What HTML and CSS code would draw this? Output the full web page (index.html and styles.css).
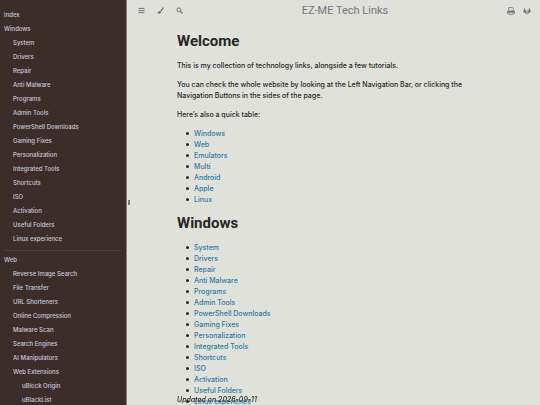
FILE: index.html
```html
<!DOCTYPE html>
<html lang="en">
<head>
  <meta charset="UTF-8">
  <meta name="viewport" content="width=device-width, initial-scale=1.0">
  <title>EZ-ME Tech Links</title>
  <link rel="stylesheet" href="styles.css">
</head>
<body>

  <nav class="sidebar">
    <ol class="chapter">
      <li><a href="#index">Index</a></li>
      <li><a href="#windows">Windows</a>
        <ol>
          <li><a href="#system">System</a></li>
          <li><a href="#drivers">Drivers</a></li>
          <li><a href="#repair">Repair</a></li>
          <li><a href="#anti-malware">Anti Malware</a></li>
          <li><a href="#programs">Programs</a></li>
          <li><a href="#admin-tools">Admin Tools</a></li>
          <li><a href="#powershell">PowerShell Downloads</a></li>
          <li><a href="#gaming">Gaming Fixes</a></li>
          <li><a href="#personalization">Personalization</a></li>
          <li><a href="#integrated">Integrated Tools</a></li>
          <li><a href="#shortcuts">Shortcuts</a></li>
          <li><a href="#iso">ISO</a></li>
          <li><a href="#activation">Activation</a></li>
          <li><a href="#folders">Useful Folders</a></li>
          <li><a href="#linux-experience">Linux experience</a></li>
        </ol>
      </li>
      <li class="spacer"></li>
      <li><a href="#web">Web</a>
        <ol>
          <li><a href="#image-search">Reverse Image Search</a></li>
          <li><a href="#file-transfer">File Transfer</a></li>
          <li><a href="#shorteners">URL Shorteners</a></li>
          <li><a href="#compression">Online Compression</a></li>
          <li><a href="#malware-scan">Malware Scan</a></li>
          <li><a href="#search-engines">Search Engines</a></li>
          <li><a href="#ai">AI Manipulators</a></li>
          <li><a href="#extensions">Web Extensions</a>
            <ol>
              <li><a href="#ublock">uBlock Origin</a></li>
              <li><a href="#ublacklist">uBlackList</a></li>
            </ol>
          </li>
        </ol>
      </li>
    </ol>
  </nav>
  <div class="resize-handle"><span></span></div>

  <div class="page">
    <header class="menu-bar">
      <div class="buttons">
        <button aria-label="Toggle sidebar">
          <svg viewBox="0 0 14 14"><path d="M1 2.8h12M1 7h12M1 11.2h12" stroke="currentColor" stroke-width="2"/></svg>
        </button>
        <button aria-label="Change theme">
          <svg viewBox="0 0 14 14"><path d="M13 .6c.7.5.6 1.2.2 1.900L9.200 8.500 6.800 6.700 11.500 1.200C12 .6 12.500.3 13 .6zM6.100 7.400l2.400 1.800c.2 2.700-1.700 4.300-4.200 4.300C2 13.500.900 12 .900 9.900c1.300.9 2 .8 2.300-.3.400-1.500 1.600-2.300 2.900-2.200z" fill="currentColor"/></svg>
        </button>
        <button aria-label="Search">
          <svg viewBox="0 0 14 14" fill="none" stroke="currentColor" stroke-width="2"><circle cx="5.800" cy="5.800" r="4"/><path d="M9 9l4 4" stroke-width="2.400"/></svg>
        </button>
      </div>
      <div class="menu-title">EZ-ME Tech Links</div>
      <div class="buttons">
        <a href="#print" aria-label="Print">
          <svg viewBox="0 0 14 14" fill="none" stroke="currentColor" stroke-width="1.400"><path d="M3 7V1h6.500L11 2.600V7M3 11H.8V8c0-.7.400-1.100 1.100-1.100h10.200c.7 0 1.100.4 1.100 1.100v3H11M3 9.500h8V13H3z"/><path d="M1 8h12" stroke-width="2"/></svg>
        </a>
        <a href="#repository" aria-label="Repository">
          <svg viewBox="0 0 14 14" fill="currentColor"><path d="M2.900.8L.3 8.100 7 13.300 4.400 5.600zM11.100.8l2.600 7.300L7 13.300l2.600-7.700z"/><path d="M4.800 5.600h4.400L7 13z" opacity=".5"/></svg>
        </a>
      </div>
    </header>

    <main>
      <h1>Welcome</h1>
      <p>This is my collection of technology links, alongside a few tutorials.</p>
      <p>You can check the whole website by looking at the Left Navigation Bar, or clicking the Navigation Buttons in the sides of the page.</p>
      <p>Here’s also a quick table:</p>
      <ul>
        <li><a href="#windows">Windows</a></li>
        <li><a href="#web">Web</a></li>
        <li><a href="#emulators">Emulators</a></li>
        <li><a href="#multi">Multi</a></li>
        <li><a href="#android">Android</a></li>
        <li><a href="#apple">Apple</a></li>
        <li><a href="#linux">Linux</a></li>
      </ul>
      <h1>Windows</h1>
      <ul>
        <li><a href="#system">System</a></li>
        <li><a href="#drivers">Drivers</a></li>
        <li><a href="#repair">Repair</a></li>
        <li><a href="#anti-malware">Anti Malware</a></li>
        <li><a href="#programs">Programs</a></li>
        <li><a href="#admin-tools">Admin Tools</a></li>
        <li><a href="#powershell">PowerShell Downloads</a></li>
        <li><a href="#gaming">Gaming Fixes</a></li>
        <li><a href="#personalization">Personalization</a></li>
        <li><a href="#integrated">Integrated Tools</a></li>
        <li><a href="#shortcuts">Shortcuts</a></li>
        <li><a href="#iso">ISO</a></li>
        <li><a href="#activation">Activation</a></li>
        <li><a href="#folders">Useful Folders</a></li>
        <li><a href="#linux-experience">Linux experience</a></li>
      </ul>
      <footer class="updated">Updated on 2026-09-11</footer>
    </main>
  </div>

</body>
</html>
```
FILE: styles.css
```css
* {
  box-sizing: border-box;
}
body {
  margin: 0;
  height: 100vh;
  display: flex;
  overflow: hidden;
  background-color: #e1e1db;
  color: #262625;
  font-family: Inter, "Liberation Sans", sans-serif;
  font-size: 7px;
  font-weight: 500;
  line-height: 11px;
}
a {
  color: #2b79a2;
  text-decoration: none;
}
.sidebar {
  flex: 0 0 126px;
  padding: 8px 4px;
  overflow: hidden;
  background-color: #3b2e2a;
  font-size: 6px;
}
.sidebar ol {
  list-style: none;
  margin: 0;
  padding-left: 9px;
}
.sidebar .chapter {
  padding-left: 0;
}
.sidebar a {
  display: block;
  line-height: 14px;
  color: #c8c9db;
}
.sidebar .spacer {
  height: 1px;
  margin: 4px 0 2px;
  background-color: #4c3b3c;
}
.resize-handle {
  flex: 0 0 4px;
  display: flex;
  align-items: center;
  justify-content: flex-end;
  border-left: 1px solid #8f8680;
}
.resize-handle span {
  width: 2px;
  height: 5px;
  background-color: #737480;
}
.page {
  flex: 1;
  min-width: 0;
  height: 100vh;
  overflow: hidden;
}
.menu-bar {
  display: flex;
  align-items: center;
  justify-content: space-between;
  height: 21px;
  padding: 0 9px 0 8px;
  color: #737480;
}
.buttons {
  display: flex;
  gap: 12px;
}
.buttons:last-child {
  gap: 8px;
}
.buttons button,
.buttons a {
  display: flex;
  padding: 0;
  border: none;
  background: none;
  color: inherit;
}
.buttons svg {
  width: 7px;
  height: 7px;
}
.buttons:last-child svg {
  width: 8px;
  height: 8px;
}
.menu-title {
  flex: 1;
  text-align: center;
  font-family: Roboto, "Liberation Sans", sans-serif;
  font-size: 11px;
  font-weight: 400;
}
main {
  max-width: 336px;
  margin: 0 auto;
  padding: 0 10px;
}
h1 {
  margin: 12px 0 11px;
  font-family: Roboto, "Liberation Sans", sans-serif;
  font-size: 15px;
  font-weight: 700;
  line-height: 16px;
}
p {
  margin: 0 0 8px;
}
ul {
  list-style: none;
  margin: 0;
  padding-left: 9px;
}
ul li {
  display: flex;
  align-items: center;
  gap: 5px;
}
ul li::before {
  content: "";
  width: 3px;
  height: 3px;
  border-radius: 50%;
  background-color: #262625;
}
ul + h1 {
  margin-top: 10px;
}
.updated {
  position: fixed;
  bottom: 0;
  font-style: italic;
}
```
